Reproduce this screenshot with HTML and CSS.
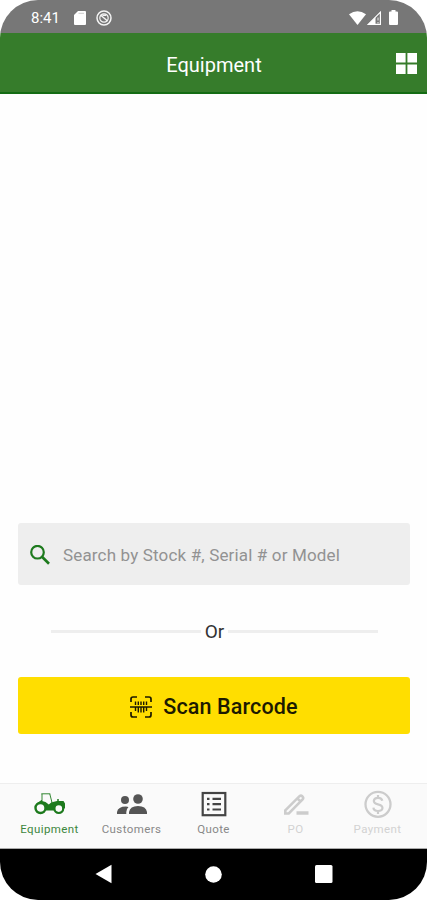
FILE: index.html
```
<!DOCTYPE html>
<html lang="en">
<head>
    <meta charset="UTF-8">
    <meta name="viewport" content="width=device-width, initial-scale=1.0">
    <title>Equipment</title>
    <link rel="stylesheet" href="styles.css">
</head>
<body>
    <div class="phone">
        <div class="status-bar">
            <span class="time">8:41</span>
            <svg class="sd-icon" width="12" height="14" viewBox="0 0 12 14"><path d="M4 0h7a1 1 0 0 1 1 1v12a1 1 0 0 1-1 1H1a1 1 0 0 1-1-1V4z" fill="#fff"/><path d="M4.500 2.300H10" stroke="#ccc" stroke-width="1"/></svg>
            <svg class="sync-icon" width="16" height="16" viewBox="0 0 16 16" fill="none" stroke="#f4f4f4"><circle cx="8" cy="8" r="7" stroke-width="1.500"/><circle cx="8" cy="8" r="4.200" stroke-width="1.200"/><path d="M4.500 5l7 6M6.500 5.300h3.500" stroke-width="1.400"/></svg>
            <div class="status-right">
                <svg width="17" height="14" viewBox="0 0 17 14"><path d="M0 3.200Q8.500-2.800 17 3.200L8.500 14z" fill="#fff"/></svg>
                <svg class="signal-icon" width="14" height="14" viewBox="0 0 14 14"><path d="M1.200 13.400L13.400 1.200v12.200z" fill="#777" stroke="#fff" stroke-width="1.200"/><path d="M1 13.500L8.500 6v7.500z" fill="#fff"/><path d="M11 6.500v3M11 11v1.500" stroke="#ddd" stroke-width="1.200"/></svg>
                <svg class="battery-icon" width="9" height="15" viewBox="0 0 9 15"><path d="M2.500 0h4v1.500H8a1 1 0 0 1 1 1V14a1 1 0 0 1-1 1H1a1 1 0 0 1-1-1V2.500a1 1 0 0 1 1-1h1.500z" fill="#fff"/></svg>
            </div>
        </div>

        <header class="header">
            <h1>Equipment</h1>
            <svg class="grid-icon" width="21" height="21" viewBox="0 0 21 21" fill="#fff"><path d="M0 0h9.600v9.600H0zM11.400 0H21v9.600h-9.600zM0 11.400h9.600V21H0zM11.400 11.400H21V21h-9.600z"/></svg>
        </header>

        <main class="content">
            <div class="search">
                <svg width="20" height="20" viewBox="0 0 20 20" fill="none" stroke="#1d7a1d" stroke-width="2.200"><circle cx="7.500" cy="7.200" r="6.300"/><path d="M12 11.700l7 7" stroke-width="2.700"/></svg>
                <span>Search by Stock #, Serial # or Model</span>
            </div>
            <div class="divider"><span>Or</span></div>
            <button class="scan-btn">
                <svg width="22" height="22" viewBox="0 0 22 22" fill="none" stroke="#1c1a00" stroke-width="1.700"><path d="M1 6V3q0-2 2-2h4M15 1h4q2 0 2 2v3M1 16v3q0 2 2 2h4M15 21h4q2 0 2-2v-3"/><path d="M0 11h22" stroke-width="1.500"/><path d="M5.500 5.500V9M8.300 5.500V9M11 5.500V9M13.700 5.500V9M16.500 5.500V9M5.500 11v4M8.300 11v5.500M11 11v5.500M13.700 11v5.500M16.500 11v4" stroke-width="1.400"/></svg>
                <span>Scan Barcode</span>
            </button>
        </main>

        <nav class="tabs">
            <div class="tab active">
                <svg width="32" height="28" viewBox="0 0 32 28"><path d="M7.500 10H17l1 2.200 5-1.200h6.500l1.500 2.500V18l-3 2.500H11L2.500 13.500z" fill="#1d7a1d"/><path d="M8.500 4.300h7.300l2 7.700-3 2.500-3.300-2.500-3.500-1z" fill="#fafafa"/><path d="M7.300 3.800h9M8 4v7.500M15.800 4l2.200 8.500" stroke="#1d7a1d" stroke-width=".9" fill="none"/><path d="M24 9v3" stroke="#1d7a1d" stroke-width="1.500"/><circle cx="6.500" cy="18" r="5" fill="#fafafa" stroke="#1d7a1d" stroke-width="2.400"/><circle cx="24.800" cy="18.600" r="4.400" fill="#fafafa" stroke="#1d7a1d" stroke-width="2.200"/></svg>
                <span>Equipment</span>
            </div>
            <div class="tab">
                <svg width="32" height="28" viewBox="0 0 32 28" fill="#555"><circle cx="9" cy="10" r="4"/><circle cx="22" cy="9" r="4.800"/><path d="M1 24v-2q1-5.500 9-5.500 1.500 0 2.500.4-2.200 2-2.200 5V24zM13 24v-2q1-6 9-6t9 6v2z"/></svg>
                <span>Customers</span>
            </div>
            <div class="tab">
                <svg width="32" height="28" viewBox="0 0 32 28" fill="none" stroke="#444"><rect x="4.700" y="3" width="22.600" height="22.200" stroke-width="2.200"/><path d="M9 8.800h2.500M9 14.200h2.500M9 19.500h2.500M14.500 8.800H23M14.500 14.200H23M14.500 19.500H23" stroke-width="2.200"/></svg>
                <span>Quote</span>
            </div>
            <div class="tab disabled">
                <svg width="32" height="28" viewBox="0 0 32 28" fill="none" stroke="#ccc"><path d="M5.300 20.300L19.500 6.200q1.500-1.200 2.900.2 1.500 1.500.2 3L8.800 23.500H5.300zM17.500 8.500l3.200 3.200" stroke-width="2.600"/><path d="M16.500 23H28.500" stroke-width="3.600"/></svg>
                <span>PO</span>
            </div>
            <div class="tab disabled">
                <svg width="32" height="28" viewBox="0 0 32 28" fill="none" stroke="#ccc"><circle cx="16" cy="14.300" r="12.500" stroke-width="2.300"/><path d="M20.300 10.800q-.5-3-4.300-3t-4.200 3q0 2.600 4.200 3.500 4.500 1 4.500 3.700-.2 3-4.500 3t-4.600-3.300M16 5v3M16 21v3" stroke-width="2.200"/></svg>
                <span>Payment</span>
            </div>
        </nav>

        <div class="nav-bar">
            <svg width="17" height="20" viewBox="0 0 17 20"><path d="M.500 10L16.500.800v18.400z" fill="#fff"/></svg>
            <svg width="17" height="17" viewBox="0 0 17 17"><circle cx="8.500" cy="8.500" r="8.300" fill="#fff"/></svg>
            <svg width="18" height="18" viewBox="0 0 18 18"><rect width="17.500" height="18" rx="1.500" fill="#fff"/></svg>
        </div>
    </div>
</body>
</html>
```
FILE: styles.css
```
body {
    margin: 0;
    font-family: Roboto, sans-serif;
    background-color: #fff;
}
svg {
    display: block;
    flex-shrink: 0;
}
.phone {
    display: flex;
    flex-direction: column;
    height: 900px;
    border-radius: 38px;
    overflow: hidden;
    background-color: #fefefe;
}
.status-bar {
    display: flex;
    align-items: center;
    box-sizing: border-box;
    height: 33px;
    padding: 2px 29px 0 31px;
    background-color: #777;
    color: #fff;
}
.time {
    width: 43px;
    font-size: 15px;
}
.sync-icon {
    margin-left: 10px;
}
.status-right {
    display: flex;
    align-items: center;
    margin-left: auto;
}
.signal-icon {
    margin-left: 1px;
}
.battery-icon {
    margin-left: 8px;
}
.header {
    display: grid;
    grid-template-columns: 32px 1fr 31px;
    align-items: center;
    box-sizing: border-box;
    height: 61px;
    padding-top: 2px;
    border-bottom: 2px solid #146c14;
    background-color: #367c2b;
    color: #fff;
}
.header h1 {
    grid-column: 2;
    margin: 0;
    padding-top: 2px;
    font-size: 20px;
    font-weight: 400;
    text-align: center;
}
.content {
    display: flex;
    flex: 1;
    flex-direction: column;
    justify-content: flex-end;
    padding: 0 17px 49px 18px;
}
.search {
    display: flex;
    align-items: center;
    gap: 13px;
    height: 62px;
    box-sizing: border-box;
    padding: 2px 12px 0;
    border-radius: 3px;
    background-color: #eee;
    color: #929292;
    font-size: 17px;
    letter-spacing: 0.16px;
}
.divider {
    display: flex;
    align-items: center;
    gap: 4px;
    height: 92px;
    padding: 0 32px 0 33px;
    color: #333;
    font-size: 19px;
}
.divider::before,
.divider::after {
    content: "";
    flex: 1;
    height: 3px;
    background-color: #eee;
}
.scan-btn {
    display: flex;
    align-items: center;
    justify-content: center;
    gap: 11px;
    height: 57px;
    padding: 2px 0 0;
    border: none;
    border-radius: 3px;
    background-color: #ffde00;
    color: #1c1a00;
    font-family: inherit;
    font-size: 21.5px;
    font-weight: 500;
    letter-spacing: 0.15px;
}
.tabs {
    display: grid;
    grid-template-columns: repeat(5, 82px);
    justify-content: center;
    box-sizing: border-box;
    height: 66px;
    padding-top: 6px;
    border-top: 1px solid #eee;
    border-bottom: 1px solid #aaa;
    background-color: #fafafa;
}
.tab {
    display: flex;
    flex-direction: column;
    align-items: center;
    gap: 4px;
    color: #888;
    font-size: 11.5px;
    line-height: 15px;
    letter-spacing: 0.4px;
}
.active {
    color: #3d873d;
}
.disabled {
    color: #d2d2d2;
}
.nav-bar {
    display: flex;
    align-items: center;
    justify-content: space-between;
    box-sizing: border-box;
    height: 51px;
    padding: 0 94px 1px 95px;
    background-color: #000;
}
```
